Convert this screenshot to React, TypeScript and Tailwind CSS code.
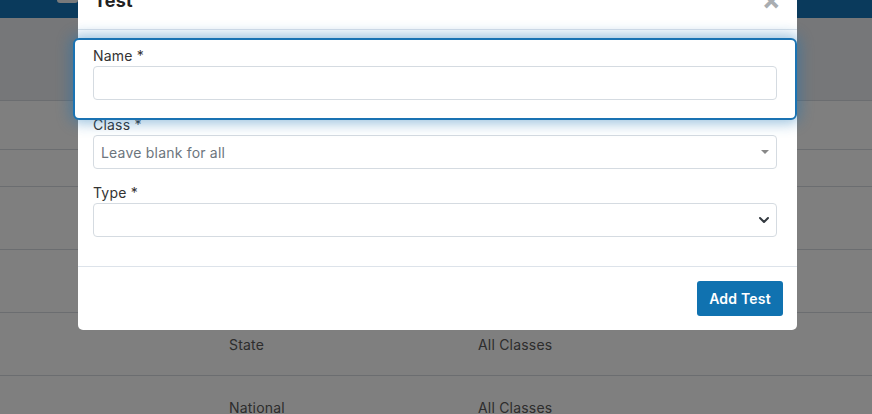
import { ChevronDown } from 'lucide-react';

interface Row {
  height: string;
  level?: string;
  classes?: string;
}

// table rows under the dialog; only the last two are uncovered
const rows: Row[] = [
  { height: 'h-[49px]' },
  { height: 'h-[37px]' },
  { height: 'h-[63px]' },
  { height: 'h-[63px]' },
  { height: 'h-[63px]', level: 'State', classes: 'All Classes' },
  { height: 'h-[63px]', level: 'National', classes: 'All Classes' },
];

export default function App() {
  return (
    <div className="relative h-[414px] w-[872px] overflow-hidden bg-white font-['Inter','Open_Sans',sans-serif] text-[14px] tracking-[0.2px]">
      {/* Page behind the dialog */}
      <div className="flex h-[18px] items-start bg-[#1474b8] pl-[57px]">
        <div className="h-[3px] w-[21px] rounded-b bg-[#f2f4f6]" />
      </div>
      <div className="h-[83px] border-b border-[#d7dbe0] bg-[#eceef3]" />
      {rows.map((row, i) => (
        <div
          key={i}
          className={`${row.height} grid grid-cols-[229px_249px_1fr] items-center border-b border-[#d7dbe0] text-[#5a5a5a]`}
        >
          <span />
          <span>{row.level}</span>
          <span>{row.classes}</span>
        </div>
      ))}

      {/* Backdrop */}
      <div className="absolute inset-0 bg-black/50" />

      {/* Dialog */}
      <div className="absolute left-[78px] top-[-29px] w-[719px] rounded-b-[5px] bg-white">
        <div className="flex h-[59px] items-center justify-between border-b border-[#dde3ea] pl-[16px] pr-[16px]">
          <h5 className="text-[18px] font-bold text-[#222]">Test</h5>
          <span className="text-[28px] font-bold leading-none text-[#a9adb1]">×</span>
        </div>

        <div className="pb-[29px] pl-[15px] pr-[20px] pt-[15px]">
          {/* Name, highlighted by the tour step */}
          <div className="relative z-10 mb-[14px]">
            <div className="absolute -bottom-[20px] -left-[20px] -right-[20px] -top-[7px] -z-10 rounded-[6px] border-2 border-[#1a73b3] bg-white shadow-[0_0_14px_3px_rgba(26,115,179,0.45)]" />
            <label className="block h-[21px] leading-[21px] text-[#333]">Name *</label>
            <input className="block h-[34px] w-full rounded-[4px] border border-[#d5dbe1] bg-white px-3 outline-none" />
          </div>

          <div className="mb-[13px]">
            <label className="block h-[21px] leading-[21px] text-[#333]">Class *</label>
            <div className="flex h-[34px] items-center justify-between rounded-[4px] border border-[#d5dbe1] pl-[7px] pr-[7px]">
              <span className="text-[#6c757d]">Leave blank for all</span>
              <span className="h-0 w-0 border-x-[4px] border-t-[4px] border-x-transparent border-t-[#888]" />
            </div>
          </div>

          <div>
            <label className="block h-[21px] leading-[21px] text-[#333]">Type *</label>
            <div className="flex h-[34px] items-center justify-end rounded-[4px] border border-[#d5dbe1] pr-[4px]">
              <ChevronDown size={16} strokeWidth={3} className="text-[#343a40]" />
            </div>
          </div>
        </div>

        <div className="flex justify-end border-t border-[#dde3ea] px-[14px] py-[14px]">
          <button className="h-[35px] w-[86px] rounded-[3px] bg-[#1072b0] font-semibold text-white">
            Add Test
          </button>
        </div>
      </div>
    </div>
  );
}
